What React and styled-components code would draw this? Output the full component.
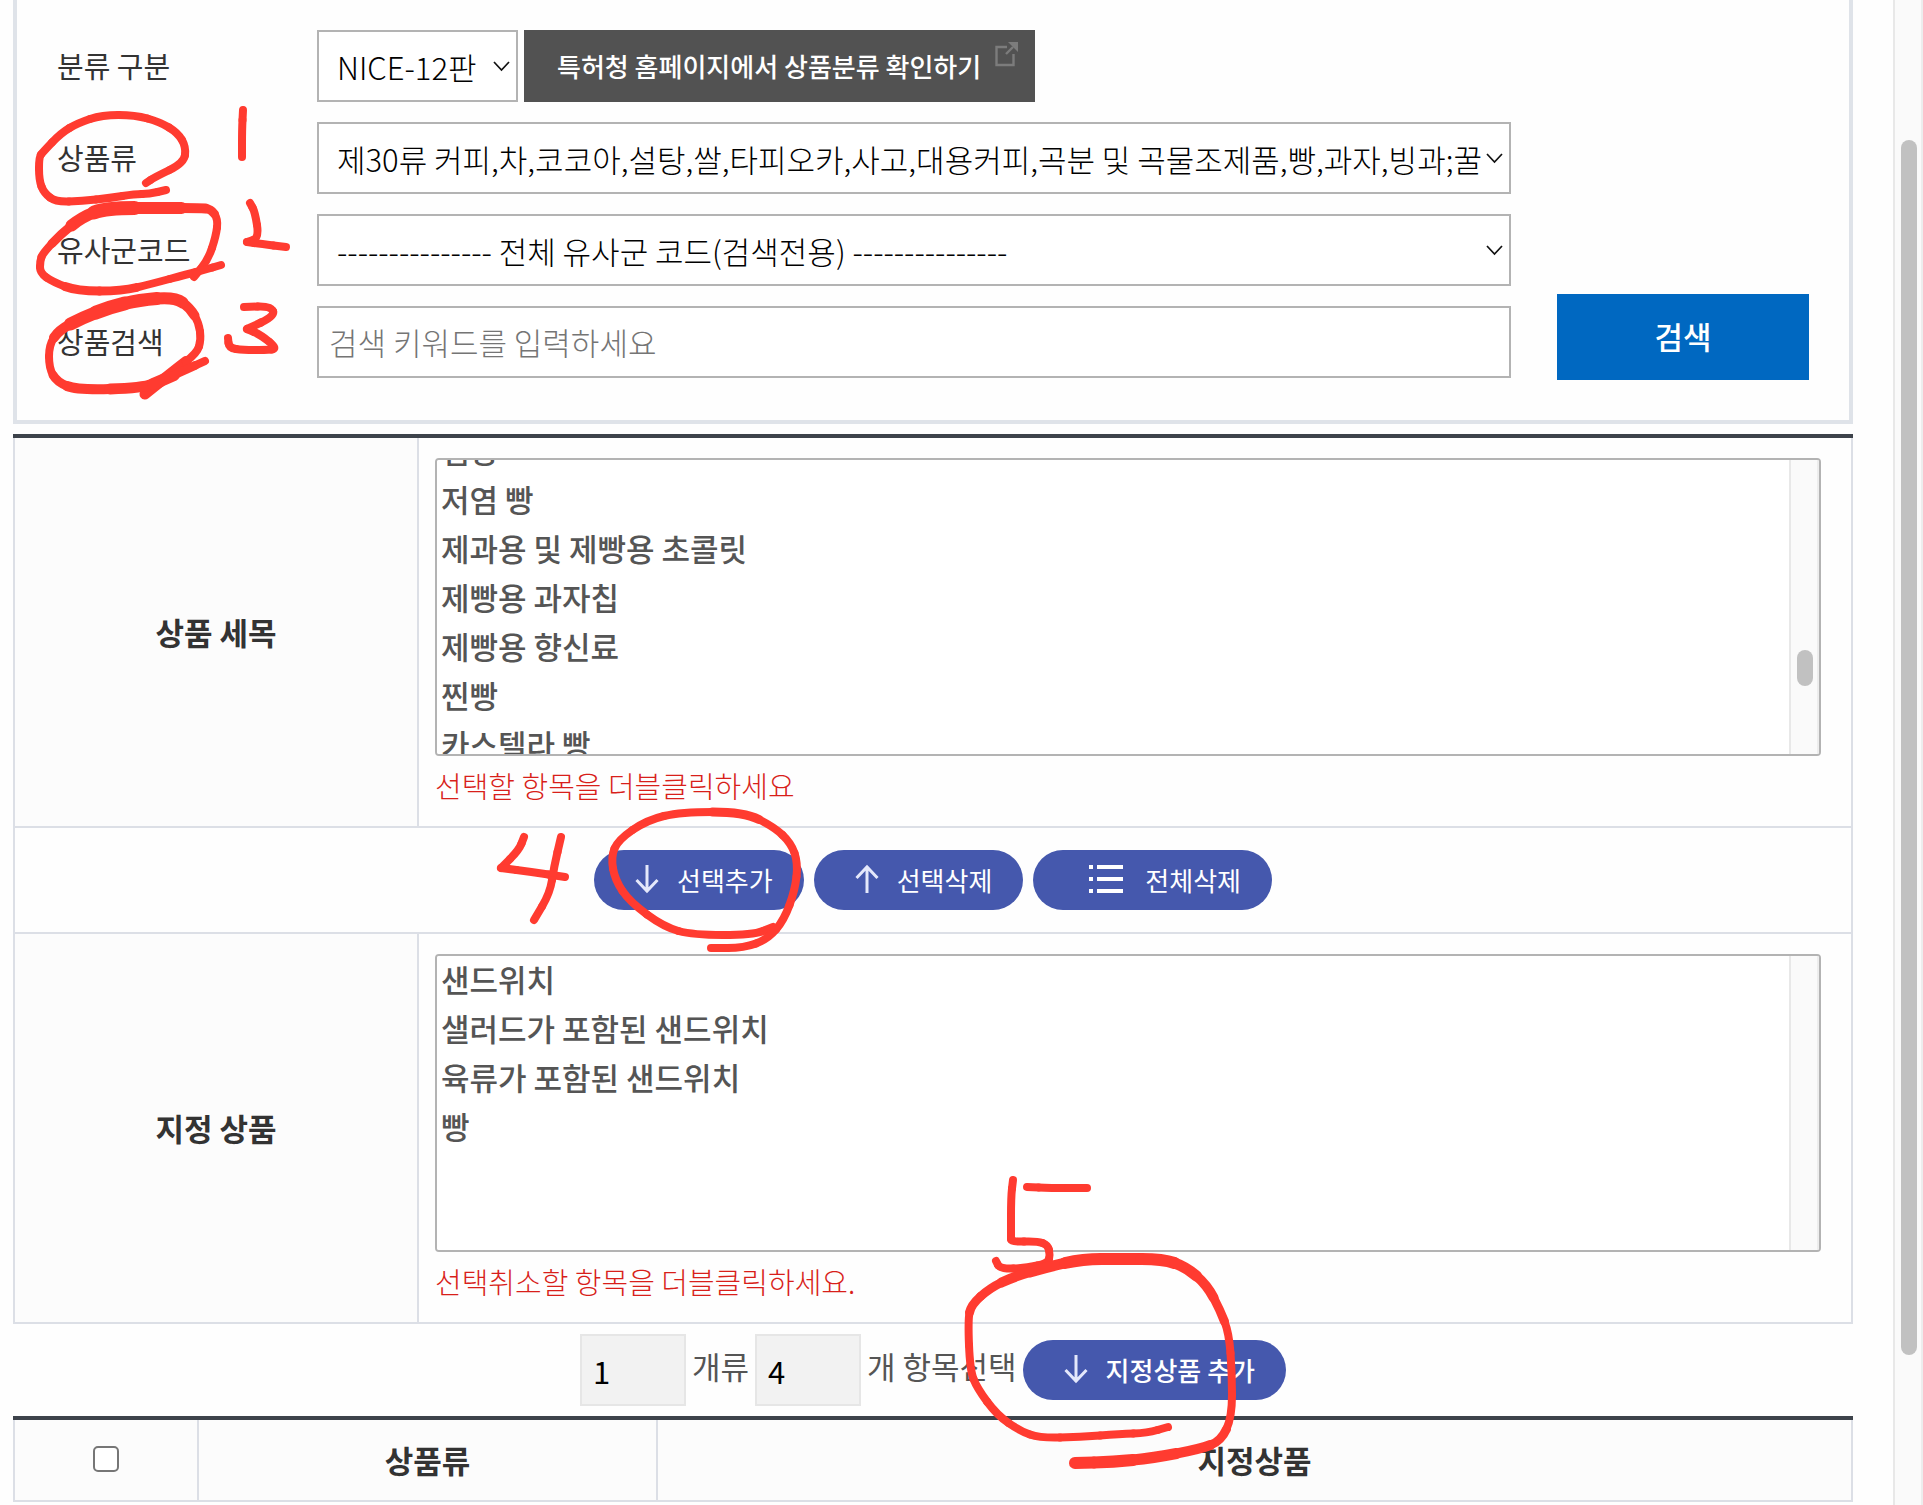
import React, { useEffect, useRef } from 'react';
import styled, { createGlobalStyle } from 'styled-components';

const GlobalStyle = createGlobalStyle`
* {
  box-sizing: border-box;
}

body {
  margin: 0;
  background: #fefefe;
  color: #333;
  font-family: "Noto Sans CJK KR", "Noto Sans", sans-serif;
  font-size: 31px;
}

button, input, select {
  margin: 0;
  border-radius: 0;
  font-family: inherit;
  font-size: inherit;
}
`

const Page = styled.div`
position: relative;
display: flex;
min-height: 100vh;
overflow: hidden;
`

const Main = styled.main`
flex: 1;
min-width: 0;
padding: 0 40px 0 13px;
`

const PageTrack = styled.div`
display: flex;
flex-direction: column;
width: 30px;
padding: 140px 4px 150px 6px;
background: #fafafa;
border-left: 2px solid #e8e8e8;
border-right: 2px solid #ededed;
`

const PageThumb = styled.div`
flex: 1;
width: 16px;
border-radius: 8px;
background: #c1c1c1;
`

const SearchForm = styled.form`
display: flex;
align-items: flex-end;
gap: 46px;
padding: 30px 40px 40px;
border: 4px solid #dfe3e9;
border-top: none;
`

const Fields = styled.div`
display: grid;
flex: 1;
min-width: 0;
row-gap: 20px;
padding-bottom: 2px;
`

const Field = styled.div`
display: flex;
align-items: center;
height: 72px;
`

const Label = styled.label`
flex: none;
width: 260px;
padding-bottom: 2px;
font-size: 29px;
`

const SelectBox = styled.div`
position: relative;
flex: ${p => p.short ? 'none' : '1'};
min-width: 0;
width: ${p => p.short ? '201px' : 'auto'};

svg {
  position: absolute;
  top: 31px;
  right: 8px;
  pointer-events: none;
}
`

const Select = styled.select`
display: block;
width: 100%;
height: 72px;
padding: 0 28px 0 18px;
appearance: none;
background: white;
border: 2px solid #b3b3b3;
color: black;
font-weight: 300;
`

const Keyword = styled.input`
flex: 1;
min-width: 0;
height: 72px;
padding: 0 10px 2px;
background: white;
border: 2px solid #b3b3b3;
font-weight: 300;

&::placeholder {
  color: #757575;
}
`

const ClassLink = styled.a`
display: flex;
align-items: center;
gap: 14px;
height: 72px;
margin-left: 6px;
padding: 0 17px 2px 33px;
background: #525252;
color: white;
font-size: 26px;
font-weight: 500;
text-decoration: none;
white-space: nowrap;

svg {
  align-self: flex-start;
  margin-top: 12px;
}
`

const SearchButton = styled.button`
flex: none;
width: 252px;
height: 86px;
padding: 0 0 4px;
background: #0068c1;
border: none;
color: white;
font-weight: 500;

&:hover {
  cursor: pointer;
}
`

const Section = styled.section`
margin-top: ${p => p.gap ? '10px' : '0'};
border-top: 4px solid #3d434b;
`

const Table = styled.table`
width: 100%;
table-layout: fixed;
border-collapse: separate;
border-spacing: 0;
border-left: 2px solid #dcdfe6;
border-right: 2px solid #dcdfe6;
`

const HeadCell = styled.th`
width: ${p => p.width || 'auto'};
height: ${p => p.height || 'auto'};
padding: 0 0 2px;
background: #fcfcfc;
border-bottom: 2px solid #dcdfe6;
border-right: ${p => p.last ? 'none' : '2px solid #dcdfe6'};
font-weight: 700;
`

const Cell = styled.td`
padding: 20px 30px 20px 16px;
border-bottom: 2px solid #dcdfe6;
`

const ListFrame = styled.div`
display: flex;
height: 298px;
overflow: hidden;
background: white;
border: 2px solid #b3b3b3;
border-radius: 4px;
`

const List = styled.select`
flex: 1;
min-width: 0;
height: 294px;
padding: 0;
border: none;
outline: none;
background: white;
color: #555;
scrollbar-width: none;

option {
  height: 49px;
  padding: 0 4px;
  font-weight: 500;
  line-height: 49px;
}
`

const ListTrack = styled.div`
width: 30px;
padding: 190px 0 0 6px;
background: #fafafa;
border-left: 2px solid #e8e8e8;
border-right: 2px solid #ededed;
`

const ListThumb = styled.div`
width: 16px;
height: 36px;
border-radius: 8px;
background: #c1c1c1;
`

const Hint = styled.p`
margin: 9px 0 1px;
color: #d81f1a;
font-size: 29px;
font-weight: 300;
line-height: 40px;
`

const ActionCell = styled.td`
padding: 22px 0;
border-bottom: 2px solid #dcdfe6;
`

const Actions = styled.div`
display: flex;
justify-content: center;
gap: 10px;
`

const Pill = styled.button`
display: flex;
align-items: center;
gap: ${p => p.wide ? '22px' : '18px'};
height: 60px;
padding: ${p => p.wide ? '0 31px 2px 56px' : '0 31px 2px 41px'};
background: #4558ad;
border: none;
border-radius: 30px;
color: white;
font-size: 26px;
font-weight: ${p => p.strong ? '500' : '400'};
white-space: nowrap;

&:hover {
  cursor: pointer;
}
`

const Summary = styled.div`
display: flex;
align-items: center;
justify-content: center;
gap: 6px;
padding: 10px 0;
color: #555;

label {
  padding-bottom: 10px;
}
`

const Count = styled.input`
width: 106px;
height: 72px;
padding: 0 11px;
background: #f2f2f2;
border: 2px solid #e6e6e6;
color: black;
font-weight: 400;
`

const Check = styled.input`
display: block;
width: 26px;
height: 26px;
margin: 0 auto;
appearance: none;
background: white;
border: 2px solid #767676;
border-radius: 5px;

&:checked {
  background: #0068c1;
}
`

const Ink = styled.svg`
position: absolute;
top: 0;
left: 0;
pointer-events: none;
`

const Chevron = () => (
  <svg width="17" height="11" viewBox="0 0 17 11" fill="none" stroke="#111" strokeWidth="1.7">
    <path d="M1 1l7.5 8L16 1" />
  </svg>
)

const ExternalIcon = () => (
  <svg width="23" height="25" viewBox="0 0 23 25" fill="none" stroke="#7c7c7c" strokeWidth="2.4">
    <path d="M12 5H1.5v18h17V12" />
    <path d="M11 12l7-7" />
    <path d="M13 0h10v10z" fill="#7c7c7c" stroke="none" />
  </svg>
)

const ArrowIcon = ({ up }) => (
  <svg width="24" height="30" viewBox="0 0 24 30" fill="none" stroke="#e4e8fb" strokeWidth="3">
    {up
      ? <path d="M12 29V2M1.5 14L12 3l10.5 11" />
      : <path d="M12 1v27M1.5 16L12 27l10.5-11" />}
  </svg>
)

const ListIcon = () => (
  <svg width="34" height="30" viewBox="0 0 34 30" fill="white">
    <path d="M0 1h4v4H0zM8 1h26v4H8zM0 13h4v4H0zM8 13h26v4H8zM0 25h4v4H0zM8 25h26v4H8z" />
  </svg>
)

// Pen strokes: [x, y] or [x, y, width] where the pen gets thicker.
// A point given twice is a sharp corner.
const strokes = [
  [[146, 183], [155, 177], [184, 163], [186, 147], [178, 133], [160, 122], [135, 115], [102, 115], [78, 123], [61, 133], [43, 152], [39, 157], [39, 180], [44, 193], [56, 202], [82, 201], [110, 198], [135, 194], [149, 194], [166, 190]],
  [[243, 110], [242, 130], [242, 157]],
  [[194, 277], [208, 260], [216, 236], [218, 219], [211, 209, 9], [200, 208, 10], [163, 208, 12], [106, 208, 14], [82, 217, 12], [61, 234, 9], [43, 253], [40, 261], [40, 273], [53, 282], [77, 291, 9], [122, 291, 9], [151, 284], [188, 274], [204, 270], [221, 265]],
  [[250, 203], [255, 212], [259, 238], [247, 242], [247, 242], [261, 244], [286, 247]],
  [[145, 394, 11], [175, 370, 11], [197, 353], [201, 340], [199, 323], [190, 308, 10], [175, 297, 12], [139, 300, 13], [110, 307, 14], [82, 318, 13], [59, 330, 10], [49, 345], [49, 368], [57, 382, 9], [77, 390, 10], [143, 388, 11], [163, 380, 12], [185, 370, 9], [205, 361]],
  [[244, 307], [271, 306], [275, 316], [247, 329], [247, 329], [261, 335], [278, 349], [265, 350], [243, 350], [229, 348], [228, 338]],
  [[524, 837], [519, 850], [501, 868], [501, 868], [532, 872], [565, 877]],
  [[561, 837], [554, 867], [550, 893], [534, 920]],
  [[773, 927], [753, 935], [693, 935], [664, 927], [630, 902], [615, 880], [611, 857], [618, 840], [647, 820], [681, 812], [744, 812, 9], [774, 827], [791, 843], [798, 863], [795, 890], [784, 920], [768, 939], [744, 948], [711, 948]],
  [[1013, 1180], [1011, 1197], [1011, 1236], [1011, 1242], [1037, 1241], [1048, 1245], [1050, 1255], [1048, 1263], [1027, 1268], [1000, 1269], [996, 1261]],
  [[1027, 1187], [1050, 1188], [1087, 1188]],
  [[1168, 1427], [1147, 1433], [1120, 1434], [1080, 1437], [1040, 1438], [1020, 1431], [997, 1415], [977, 1388], [970, 1370], [968, 1320], [971, 1305, 9], [990, 1288, 9], [1013, 1277, 10], [1047, 1267, 11], [1083, 1259, 12], [1120, 1259, 12], [1163, 1259, 12], [1186, 1267, 11], [1207, 1285, 10], [1220, 1310, 9], [1229, 1333], [1232, 1373], [1232, 1417], [1221, 1441, 9], [1200, 1449, 10], [1153, 1458, 11], [1113, 1462, 12], [1075, 1463, 12]]
]

const middle = (a, b) => [(a[0] + b[0]) / 2, (a[1] + b[1]) / 2];

const Stroke = ({ points }) => points.map((point, i) => {
  const from = i === 0 ? point : middle(points[i - 1], point);
  const to = i === points.length - 1 ? point : middle(point, points[i + 1]);

  return (
    <path
      key={i}
      d={`M${from[0]} ${from[1]}Q${point[0]} ${point[1]} ${to[0]} ${to[1]}`}
      strokeWidth={point[2] || 8}
    />
  )
})

const details = ['잼빵', '저염 빵', '제과용 및 제빵용 초콜릿', '제빵용 과자칩', '제빵용 향신료', '찐빵', '카스텔라 빵'];
const chosen = ['샌드위치', '샐러드가 포함된 샌드위치', '육류가 포함된 샌드위치', '빵'];

const ListBox = ({ id, items, offset, thumb }) => {
  const list = useRef(null);

  useEffect(() => {
    list.current.scrollTop = offset || 0;
  }, [offset])

  return (
    <ListFrame>
      <List id={id} ref={list} multiple size={6}>
        {items.map(item => <option key={item}>{item}</option>)}
      </List>
      <ListTrack>{thumb && <ListThumb />}</ListTrack>
    </ListFrame>
  )
}

const App = () => {

  return (
    <Page>
      <GlobalStyle />
      <Main>
        <SearchForm onSubmit={e => e.preventDefault()}>
          <Fields>
            <Field>
              <Label htmlFor="edition">분류 구분</Label>
              <SelectBox short>
                <Select id="edition">
                  <option>NICE-12판</option>
                </Select>
                <Chevron />
              </SelectBox>
              <ClassLink href="#">
                특허청 홈페이지에서 상품분류 확인하기
                <ExternalIcon />
              </ClassLink>
            </Field>
            <Field>
              <Label htmlFor="class">상품류</Label>
              <SelectBox>
                <Select id="class">
                  <option>제30류 커피,차,코코아,설탕,쌀,타피오카,사고,대용커피,곡분 및 곡물조제품,빵,과자,빙과;꿀</option>
                </Select>
                <Chevron />
              </SelectBox>
            </Field>
            <Field>
              <Label htmlFor="code">유사군코드</Label>
              <SelectBox>
                <Select id="code">
                  <option>--------------- 전체 유사군 코드(검색전용) ---------------</option>
                </Select>
                <Chevron />
              </SelectBox>
            </Field>
            <Field>
              <Label htmlFor="keyword">상품검색</Label>
              <Keyword id="keyword" type="text" placeholder="검색 키워드를 입력하세요" />
            </Field>
          </Fields>
          <SearchButton type="submit">검색</SearchButton>
        </SearchForm>

        <Section gap>
          <Table>
            <tbody>
              <tr>
                <HeadCell scope="row" width="404px">
                  <label htmlFor="details">상품 세목</label>
                </HeadCell>
                <Cell>
                  <ListBox id="details" items={details} offset={33} thumb />
                  <Hint>선택할 항목을 더블클릭하세요</Hint>
                </Cell>
              </tr>
              <tr>
                <ActionCell colSpan={2}>
                  <Actions>
                    <Pill type="button"><ArrowIcon />선택추가</Pill>
                    <Pill type="button"><ArrowIcon up />선택삭제</Pill>
                    <Pill type="button" wide><ListIcon />전체삭제</Pill>
                  </Actions>
                </ActionCell>
              </tr>
              <tr>
                <HeadCell scope="row">
                  <label htmlFor="chosen">지정 상품</label>
                </HeadCell>
                <Cell>
                  <ListBox id="chosen" items={chosen} />
                  <Hint>선택취소할 항목을 더블클릭하세요.</Hint>
                </Cell>
              </tr>
            </tbody>
          </Table>
        </Section>

        <Summary>
          <Count id="classes" type="text" defaultValue="1" readOnly />
          <label htmlFor="classes">개류</label>
          <Count id="items" type="text" defaultValue="4" readOnly />
          <label htmlFor="items">개 항목선택</label>
          <Pill type="button" strong><ArrowIcon />지정상품 추가</Pill>
        </Summary>

        <Section>
          <Table>
            <thead>
              <tr>
                <HeadCell width="184px" height="82px">
                  <Check type="checkbox" aria-label="전체 선택" />
                </HeadCell>
                <HeadCell width="459px">상품류</HeadCell>
                <HeadCell last>지정상품</HeadCell>
              </tr>
            </thead>
          </Table>
        </Section>
      </Main>
      <PageTrack>
        <PageThumb />
      </PageTrack>

      <Ink width="1300" height="1500" fill="none" stroke="#ff3b30" strokeLinecap="round">
        {strokes.map((points, i) => <Stroke key={i} points={points} />)}
      </Ink>
    </Page>
  )
}

export default App;
